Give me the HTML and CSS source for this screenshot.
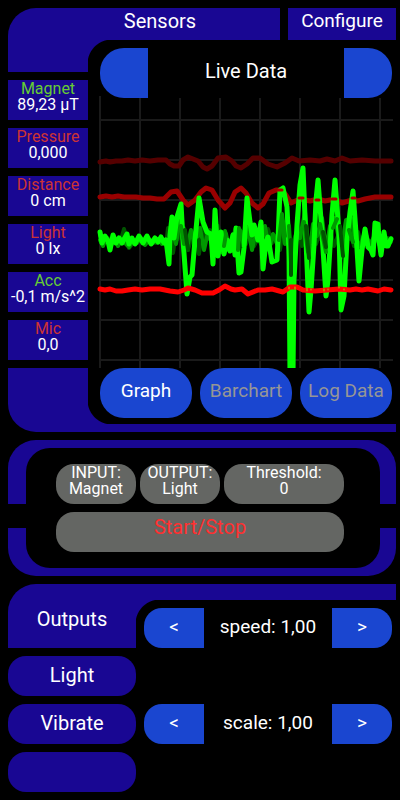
FILE: index.html
```html
<!DOCTYPE html>
<html lang="en">
<head>
    <meta charset="UTF-8">
    <meta name="viewport" content="width=device-width, initial-scale=1.0">
    <title>Sensors</title>
    <link rel="stylesheet" href="styles.css">
</head>
<body>
    <section class="sensors">
        <header class="top-bar">
            <h1 class="title">Sensors</h1>
            <button class="configure">Configure</button>
        </header>
        <div class="sensors-body">
            <div class="side">
                <div class="elbow-top"></div>
                <button class="sensor on"><span class="name">Magnet</span>89,23 µT</button>
                <button class="sensor"><span class="name">Pressure</span>0,000</button>
                <button class="sensor"><span class="name">Distance</span>0 cm</button>
                <button class="sensor"><span class="name">Light</span>0 lx</button>
                <button class="sensor on"><span class="name">Acc</span>-0,1 m/s^2</button>
                <button class="sensor"><span class="name">Mic</span>0,0</button>
                <div class="elbow-bottom"></div>
            </div>
            <div class="panel">
                <div class="stepper view">
                    <button class="prev" aria-label="Previous"></button>
                    <h2 class="stepper-text">Live Data</h2>
                    <button class="next" aria-label="Next"></button>
                </div>
                <svg class="chart" viewBox="100 98 292 270" preserveAspectRatio="none">
                    <path class="grid" d="M100 96V368M140 98V368M180 98V368M220 98V368M260 98V368M300 98V368M340 98V368M380 98V368M99 120H393M99 160H393M99 200H393M99 240H393M99 280H393M99 320H393M99 360H393"/>
                    <polyline class="red-dark" points="100,162 106,161 110,162 116,161 122,161 128,160 135,161 142,160 150,161 158,160 166,160 170,164 174,166 179,166 183,160 188,157 193,159 198,161 203,167 207,169 212,166 218,158 226,157 232,161 236,166 241,168 247,164 253,158 260,158 268,164 277,167 285,163 292,158 299,161 310,160 320,161 327,159 335,161 342,158 350,161 362,160 375,161 391,161"/>
                    <polyline class="red-mid" points="100,197 106,196 112,197 118,196 124,197 130,197 136,197 143,198 150,198 157,199 164,199 171,192 177,191 183,200 188,205 195,200 201,192 206,188 212,190 218,200 225,208 230,203 235,192 241,188 246,193 252,203 258,208 263,204 269,193 276,190 282,190 286,195 291,203 300,199 310,201 318,199 325,201 335,199 342,203 352,200 358,201 365,199 375,197 391,197"/>
                    <!-- x, y, z axes of the magnetometer -->
                    <polyline class="z" points="100,236 104,243 108,238 112,244 116,240 120,243 124,229 127,240 129,248 133,243 138,240 144,243 150,240 156,243 162,241 166,245 168,228 170,238 173,253 176,232 180,238 184,228 188,250 192,236 196,232 199,254 203,226 206,240 210,230 214,246 218,226 222,242 226,234 231,248 235,230 238,254 242,232 246,244 250,228 254,246 259,236 264,244 268,229 272,243 276,236 280,250 284,222 288,246 291,280 294,240 298,228 302,246 306,222 309,258 312,236 316,244 320,232 325,248 330,230 334,246 338,236 341,258 345,232 350,229 354,246 358,232 362,248 366,238 370,243 376,236 382,246 388,238 391,242"/>
                    <polyline class="y" points="100,240 103,246 106,238 110,243 114,238 118,246 122,239 126,244 129,247 133,240 137,243 141,238 145,245 149,240 153,243 158,239 162,244 166,241 169,246 172,230 176,244 180,220 184,236 187,248 191,230 195,246 200,228 204,250 208,232 212,244 216,232 221,252 225,231 229,250 233,234 237,252 240,230 244,246 248,228 252,250 256,230 261,244 265,226 269,250 273,234 277,244 281,218 285,244 288,222 292,270 296,234 300,238 305,212 309,258 313,224 317,236 322,218 326,250 330,226 335,218 339,240 342,246 346,220 351,218 355,238 360,246 365,232 370,246 375,234 380,246 385,236 389,244 391,238"/>
                    <polyline class="x" points="100,232 102,243 105,236 108,241 110,250 113,235 116,243 119,238 122,243 127,234 129,244 132,238 135,244 139,236 143,243 147,236 151,244 155,238 158,242 161,237 164,243 166,240 169,264 170,235 172,217 174,238 177,217 181,204 183,240 187,294 190,277 192,275 195,240 199,198 203,222 207,232 211,234 213,264 215,210 218,256 221,232 224,254 227,240 230,251 233,235 235,255 236,228 239,273 241,272 244,248 247,198 250,222 252,235 254,225 258,240 261,222 263,269 266,242 268,237 272,262 277,260 278,240 280,190 283,188 287,207 289,250 290,374 293,374 294,280 297,225 300,185 303,168 305,217 309,312 311,290 314,245 316,200 318,180 322,233 326,296 328,280 332,215 335,180 339,233 341,310 344,296 347,240 350,212 353,191 356,233 359,281 362,250 365,229 368,247 371,250 373,255 375,223 378,224 379,240 381,255 384,232 386,246 388,246 391,239"/>
                    <path class="y" d="M181 226L184 244M226 234L224 246M239 228L238 250M279 240L282 214L285 236M289 226L291 262M304 222L308 252M320 224L326 252M333 228L337 219M349 230L353 242"/>
                    <path class="z" d="M185 230L188 250M199 240V252M291 240V275M306 226L309 258M323 232L326 247M340 226L343 256"/>
                    <polyline class="red" points="100,289 105,290 110,289 116,291 122,291 128,290 135,289 142,290 150,289 160,289 170,291 178,292 184,290 188,288 195,290 202,293 213,293 219,290 225,286 231,289 235,290 242,289 248,294 258,290 265,290 272,289 283,292 290,287 297,287 303,290 315,291 327,290 339,289 350,290 356,289 362,290 368,289 378,291 384,289 391,290"/>
                    <path class="speck-mid" d="M278 190H282M299 198H303M316 200H319M332 199H336M352 198H355"/>
                    <path class="speck-x" d="M289 287V289M295 287V289M307 288V291M311 289V290M324 289V291M328 289V290M339 287V288M344 289V290"/>
                </svg>
                <nav class="tabs">
                    <button class="tab active">Graph</button>
                    <button class="tab">Barchart</button>
                    <button class="tab">Log Data</button>
                </nav>
            </div>
        </div>
        <div class="bottom-bar"></div>
    </section>

    <section class="trigger">
        <div class="trigger-inner">
            <div class="trigger-row">
                <button class="pill">INPUT:<br>Magnet</button>
                <button class="pill">OUTPUT:<br>Light</button>
                <button class="pill">Threshold:<br>0</button>
            </div>
            <button class="pill start">Start/Stop</button>
        </div>
    </section>

    <section class="outputs">
        <div class="outputs-side">
            <h2 class="outputs-title">Outputs</h2>
            <button class="output">Light</button>
            <button class="output">Vibrate</button>
            <button class="output" aria-label="Empty"></button>
        </div>
        <div class="outputs-main">
            <div class="stepper">
                <button class="prev">&lt;</button>
                <span class="stepper-text">speed: 1,00</span>
                <button class="next">&gt;</button>
            </div>
            <div class="stepper">
                <button class="prev">&lt;</button>
                <span class="stepper-text">scale: 1,00</span>
                <button class="next">&gt;</button>
            </div>
        </div>
    </section>
</body>
</html>
```

FILE: styles.css
```css
* {
    box-sizing: border-box;
}
body {
    margin: 0;
    padding: 8px 4px 8px 8px;
    display: flex;
    flex-direction: column;
    gap: 8px;
    background-color: #000;
    color: #fff;
    font-family: Roboto, sans-serif;
    font-size: 20px;
    line-height: 24px;
}
h1, h2 {
    margin: 0;
    font-size: 20px;
    font-weight: normal;
}
button {
    margin: 0;
    padding: 0;
    border: none;
    color: inherit;
    font: inherit;
    cursor: pointer;
}

/* sensors */
.sensors {
    border-radius: 28px 0 0 28px;
    overflow: hidden;
}
.top-bar {
    display: flex;
    gap: 8px;
    height: 32px;
}
.title {
    flex: 1;
    padding: 1px 0 0 32px;
    background-color: #190793;
    text-align: center;
}
.configure {
    width: 108px;
    padding-bottom: 6px;
    background-color: #190793;
    font-size: 19px;
}
.sensors-body {
    display: grid;
    grid-template-columns: 80px 1fr;
}
.side {
    display: flex;
    flex-direction: column;
    gap: 8px;
}
.elbow-top {
    height: 32px;
    background-color: #190793;
}
.elbow-bottom {
    flex: 1;
    background-color: #190793;
}
.sensor {
    height: 40px;
    padding-bottom: 6px;
    background-color: #190793;
    font-size: 16px;
    line-height: 16px;
    white-space: nowrap;
}
.name {
    display: block;
    color: #cc3333;
}
.on .name {
    color: #66cc33;
}
.panel {
    display: flex;
    flex-direction: column;
    padding: 8px 4px 6px 12px;
    background:
        radial-gradient(circle at 24px 24px, transparent 24px, #190793 25px) left top / 24px 24px no-repeat,
        radial-gradient(circle at 24px 0, transparent 24px, #190793 25px) left bottom / 24px 24px no-repeat;
}
.bottom-bar {
    height: 8px;
    background-color: #190793;
}

/* value between two arrows */
.stepper {
    display: flex;
    align-items: center;
    height: 40px;
    font-size: 19px;
}
.stepper-text {
    flex: 1;
    padding-bottom: 2px;
    text-align: center;
}
.prev, .next {
    align-self: stretch;
    width: 60px;
    padding-bottom: 2px;
    background-color: #1a46d0;
}
.prev {
    border-radius: 18px 0 0 18px;
}
.next {
    border-radius: 0 18px 18px 0;
}
.view {
    height: 50px;
}
.view .stepper-text {
    padding-bottom: 4px;
}
.view .prev, .view .next {
    width: 48px;
}
.view .prev {
    border-radius: 24px 0 0 24px;
}
.view .next {
    border-radius: 0 24px 24px 0;
}

/* chart */
.chart {
    display: block;
    width: 100%;
    height: 270px;
    overflow: visible;
    clip-path: inset(-2px -4px 0);
}
.chart polyline, .chart path {
    fill: none;
    stroke-width: 4;
    stroke-linejoin: round;
    stroke-linecap: round;
}
.chart .grid {
    stroke: #1a1a1a;
    stroke-width: 2;
    stroke-linecap: butt;
}
.chart .x {
    stroke: #00ff00;
    stroke-width: 5;
}
.chart .y {
    stroke: #009900;
}
.chart .z {
    stroke: #005500;
}
.chart .red {
    stroke: #ff0000;
    stroke-width: 5;
}
.chart .red-mid {
    stroke: #990000;
    stroke-width: 5;
}
.chart .red-dark {
    stroke: #550000;
    stroke-width: 5;
}
.chart .speck-mid {
    stroke: #aa0000;
    stroke-width: 3;
}
.chart .speck-x {
    stroke: #99dd00;
    stroke-width: 1;
}
.tabs {
    display: grid;
    grid-template-columns: repeat(3, 1fr);
    gap: 8px;
}
.tab {
    height: 50px;
    padding-bottom: 4px;
    border-radius: 24px;
    background-color: #1a46d0;
    color: #969696;
    font-size: 19px;
}
.tab.active {
    color: #fff;
}

/* trigger */
.trigger {
    padding: 8px 16px 8px 18px;
    border-radius: 28px;
    background: linear-gradient(#190793 64px, #000 64px, #000 88px, #190793 88px);
}
.trigger-inner {
    display: flex;
    flex-direction: column;
    gap: 8px;
    padding: 16px 36px 16px 30px;
    border-radius: 24px;
    background-color: #000;
}
.trigger-row {
    display: grid;
    grid-template-columns: 2fr 2fr 3fr;
    gap: 4px;
}
.pill {
    height: 40px;
    padding-bottom: 6px;
    border-radius: 18px;
    background-color: #646663;
    font-size: 16px;
    line-height: 16px;
}
.start {
    padding-bottom: 10px;
    color: #ff3030;
    font-size: 20px;
}

/* outputs */
.outputs {
    display: grid;
    grid-template-columns: 128px 1fr;
}
.outputs-side {
    display: flex;
    flex-direction: column;
    gap: 8px;
}
.outputs-title {
    height: 64px;
    padding-top: 23px;
    border-radius: 28px 0 0 0;
    background-color: #190793;
    text-align: center;
}
.output {
    height: 40px;
    padding-bottom: 2px;
    border-radius: 18px;
    background-color: #190793;
}
.outputs-main {
    display: flex;
    flex-direction: column;
    gap: 56px;
    padding: 8px 4px 0 8px;
    border-top: 16px solid #190793;
    background: radial-gradient(circle at 24px 24px, transparent 24px, #190793 25px) left top / 24px 24px no-repeat;
}
```
